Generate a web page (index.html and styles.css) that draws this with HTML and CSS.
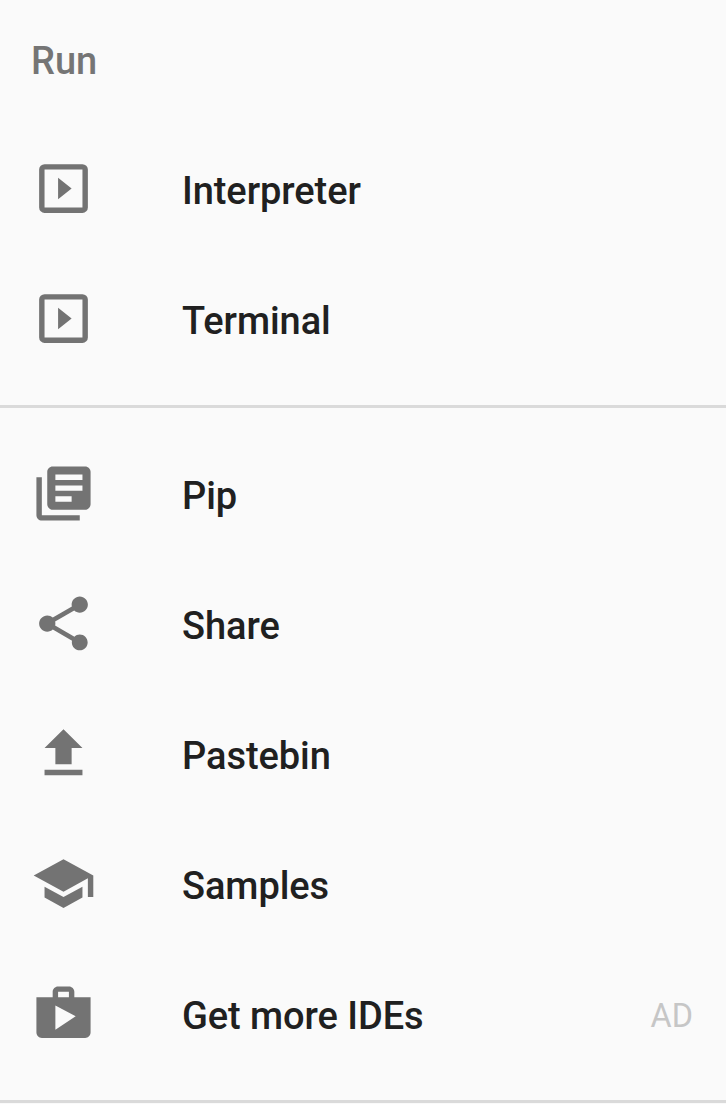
FILE: index.html
```html
<!DOCTYPE html>
<html lang="en">
<head>
<meta charset="utf-8">
<title>Menu</title>
<link rel="stylesheet" href="styles.css">
</head>
<body>
<nav class="drawer">
  <section class="group group-run">
    <h2 class="heading">Run</h2>
    <a class="item"><svg class="icon" viewBox="0 0 24 24"><path fill-rule="evenodd" d="M5 3h14a2 2 0 0 1 2 2v14a2 2 0 0 1-2 2H5a2 2 0 0 1-2-2V5a2 2 0 0 1 2-2zM5 5v14h14V5zM10 8l5 4-5 4z"/></svg><span class="label">Interpreter</span></a>
    <a class="item"><svg class="icon" viewBox="0 0 24 24"><path fill-rule="evenodd" d="M5 3h14a2 2 0 0 1 2 2v14a2 2 0 0 1-2 2H5a2 2 0 0 1-2-2V5a2 2 0 0 1 2-2zM5 5v14h14V5zM10 8l5 4-5 4z"/></svg><span class="label">Terminal</span></a>
  </section>
  <section class="group group-tools">
    <a class="item"><svg class="icon" viewBox="0 0 24 24"><path d="M4 6H2v14c0 1.100.9 2 2 2h14v-2H4V6zm16-4H8c-1.100 0-2 .9-2 2v12c0 1.100.9 2 2 2h12c1.100 0 2-.9 2-2V4c0-1.100-.9-2-2-2zm-1 9H9V9h10v2zm-4 4H9v-2h6v2zm4-8H9V5h10v2z"/></svg><span class="label">Pip</span></a>
    <a class="item"><svg class="icon" viewBox="0 0 24 24"><path d="M18 16.080c-.76 0-1.440.3-1.960.77L8.910 12.700c.05-.23.09-.46.09-.7s-.04-.47-.09-.7l7.050-4.110c.54.5 1.250.81 2.040.81 1.660 0 3-1.340 3-3s-1.340-3-3-3-3 1.340-3 3c0 .24.04.47.09.7L8.040 9.810C7.500 9.310 6.790 9 6 9c-1.660 0-3 1.340-3 3s1.340 3 3 3c.79 0 1.500-.31 2.040-.81l7.120 4.160c-.05.21-.08.43-.08.65 0 1.610 1.310 2.920 2.920 2.920s2.920-1.310 2.920-2.920-1.310-2.920-2.920-2.920z"/></svg><span class="label">Share</span></a>
    <a class="item"><svg class="icon" viewBox="0 0 24 24"><path d="M9 16h6v-6h4l-7-7-7 7h4zm-4 2h14v2H5z"/></svg><span class="label">Pastebin</span></a>
    <a class="item"><svg class="icon" viewBox="0 0 24 24"><path d="M5 13.180v4L12 21l7-3.820v-4L12 17l-7-3.820zM12 3L1 9l11 6 9-4.910V17h2V9L12 3z"/></svg><span class="label">Samples</span></a>
    <a class="item"><svg class="icon" viewBox="0 0 24 24"><path d="M16 6V4c0-1.110-.89-2-2-2h-4c-1.110 0-2 .89-2 2v2H2v13c0 1.110.89 2 2 2h16c1.110 0 2-.89 2-2V6h-6zm-6-2h4v2h-4V4zM9 18V9l7.500 4L9 18z"/></svg><span class="label">Get more IDEs</span><span class="ad">AD</span></a>
  </section>
</nav>
</body>
</html>
```
FILE: styles.css
```css
body {
  margin: 0;
  background: #fafafa;
  font-family: Roboto, sans-serif;
}
.drawer {
  height: 1104px;
  overflow: hidden;
}
.group {
  box-sizing: border-box;
  border-bottom: 3px solid #dadada;
}
.group-run {
  height: 408px;
}
.group-tools {
  height: 695px;
  padding-top: 20px;
}
.heading {
  margin: 0;
  height: 123px;
  box-sizing: border-box;
  padding-left: 31px;
  font-size: 38px;
  font-weight: 500;
  line-height: 122px;
  color: #757575;
}
.item {
  display: flex;
  align-items: center;
  height: 130px;
  box-sizing: border-box;
  padding: 0 33px 0 31px;
}
.icon {
  width: 65px;
  height: 65px;
  flex: none;
  fill: #737373;
}
.label {
  margin-left: 86px;
  padding-top: 6px;
  font-size: 38px;
  font-weight: 500;
  line-height: 44px;
  letter-spacing: -0.07px;
  color: #202020;
}
.ad {
  margin-left: auto;
  padding-top: 5px;
  font-size: 32.4px;
  line-height: 38px;
  color: #c6c6c6;
}
```
